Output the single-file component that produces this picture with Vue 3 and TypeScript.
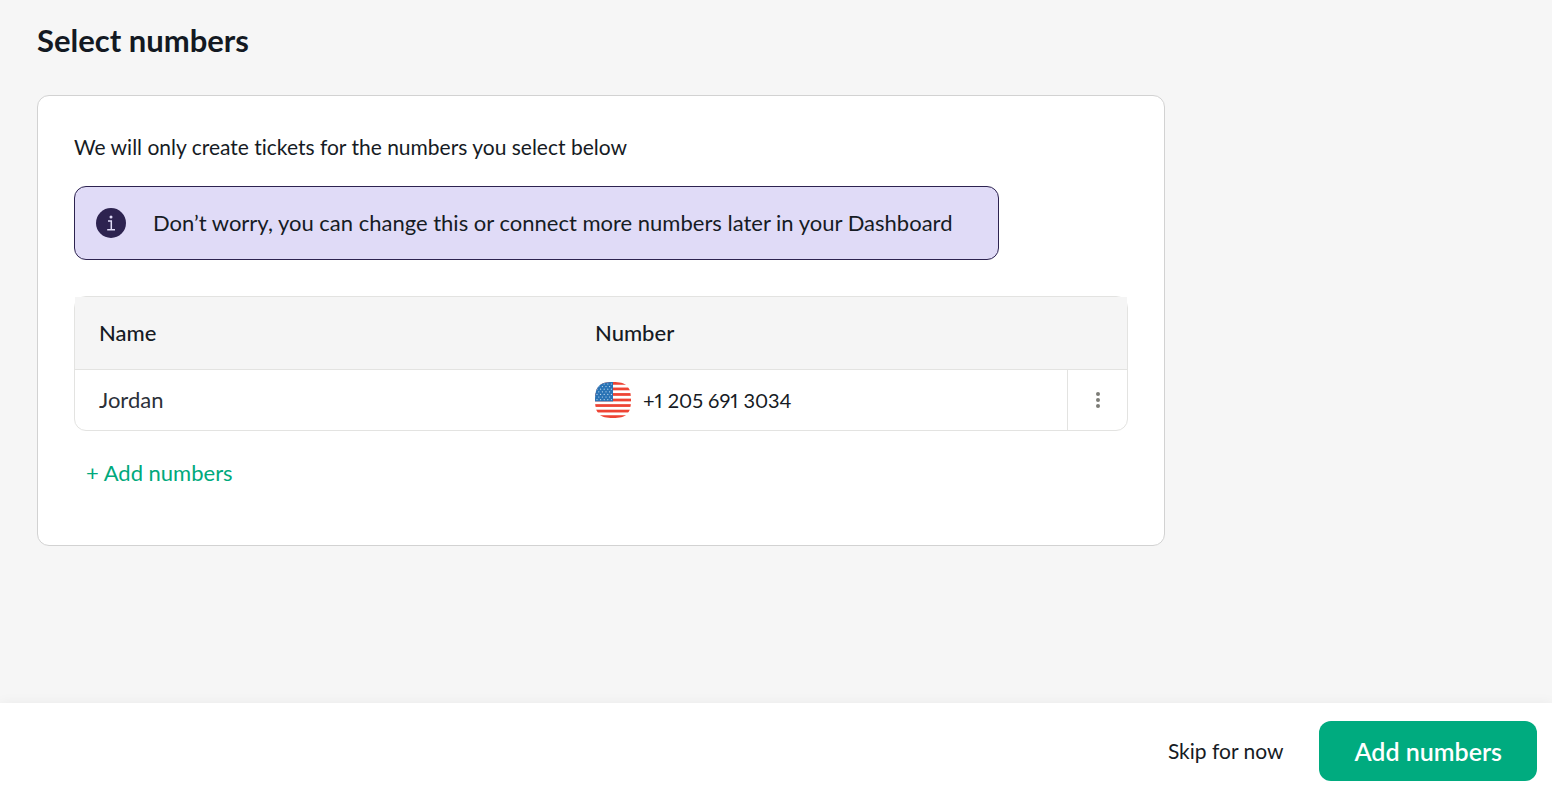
<script setup lang="ts">
interface PhoneNumber {
  name: string
  number: string
}

const numbers: PhoneNumber[] = [{ name: 'Jordan', number: '+1 205 691 3034' }]

const redStripes = [0, 2, 4, 6, 8, 10, 12]
const stars: { x: number; y: number }[] = []
for (let row = 0; row < 7; row++) {
  for (let col = 0; col < (row % 2 ? 4 : 5); col++) {
    stars.push({ x: 2 + col * 3.6 + (row % 2 ? 1.8 : 0), y: 2 + row * 2.6 })
  }
}
</script>

<template>
  <div class="page">
    <main class="content">
      <h1>Select numbers</h1>

      <section class="card">
        <p class="intro">We will only create tickets for the numbers you select below</p>

        <div class="notice" role="note">
          <svg class="info" viewBox="0 0 30 30" aria-hidden="true">
            <circle cx="15" cy="15" r="15" fill="#2d2350" />
            <circle cx="15" cy="9" r="1.5" fill="#e0dbf7" />
            <path d="M12 13h3.3v8.8M11.2 21.8h7.8" fill="none" stroke="#e0dbf7" stroke-width="1.5" />
          </svg>
          <p>Don’t worry, you can change this or connect more numbers later in your Dashboard</p>
        </div>

        <div class="table-frame">
          <table>
            <colgroup>
              <col class="col-name" />
              <col />
              <col class="col-menu" />
            </colgroup>
            <thead>
              <tr>
                <th scope="col">Name</th>
                <th scope="col">Number</th>
                <td></td>
              </tr>
            </thead>
            <tbody>
              <tr v-for="entry in numbers" :key="entry.number">
                <td class="name">{{ entry.name }}</td>
                <td>
                  <span class="phone">
                    <svg class="flag" viewBox="0 0 36 36" aria-hidden="true">
                      <defs>
                        <clipPath id="flag-shape">
                          <path d="M18 0C31 0 36 4 36 18S31 36 18 36 0 32 0 18 5 0 18 0Z" />
                        </clipPath>
                      </defs>
                      <g clip-path="url(#flag-shape)">
                        <rect width="36" height="36" fill="#fff" />
                        <rect
                          v-for="i in redStripes"
                          :key="i"
                          :y="(i * 36) / 13"
                          width="36"
                          :height="36 / 13"
                          fill="#ee4434"
                        />
                        <rect width="18" height="19.4" fill="#2a73b5" />
                        <circle v-for="(s, i) in stars" :key="i" :cx="s.x" :cy="s.y" r="0.6" fill="#c5dcf0" />
                      </g>
                    </svg>
                    <span>{{ entry.number }}</span>
                  </span>
                </td>
                <td class="menu-cell">
                  <button type="button" class="menu" :aria-label="`Options for ${entry.name}`">
                    <svg viewBox="0 0 4 16" aria-hidden="true">
                      <circle cx="2" cy="2" r="2" />
                      <circle cx="2" cy="8" r="2" />
                      <circle cx="2" cy="14" r="2" />
                    </svg>
                  </button>
                </td>
              </tr>
            </tbody>
          </table>
        </div>

        <button type="button" class="add-link">+ Add numbers</button>
      </section>
    </main>

    <footer class="footer">
      <button type="button" class="skip">Skip for now</button>
      <button type="button" class="primary">Add numbers</button>
    </footer>
  </div>
</template>

<style>
body {
  margin: 0;
  background: #f6f6f6;
}
</style>

<style scoped>
.page {
  box-sizing: border-box;
  min-height: 100vh;
  display: flex;
  flex-direction: column;
  background: #f6f6f6;
  color: #161b24;
  font-family: Lato, "Open Sans", sans-serif;
  font-size: 22px;
  line-height: 28px;
  font-variant-ligatures: none;
}
.content {
  flex: 1;
  padding: 22px 37px 36px;
}
h1 {
  margin: 0 0 37px;
  font-size: 31px;
  line-height: 36px;
  font-weight: 700;
  color: #131922;
}
p {
  margin: 0;
}
button {
  margin: 0;
  border: 0;
  background: none;
  color: inherit;
  font: inherit;
  cursor: pointer;
}
.card {
  box-sizing: border-box;
  max-width: 1128px;
  padding: 37px 36px 58px;
  border: 1px solid #d2d2d2;
  border-radius: 12px;
  background: #fff;
}
.intro {
  font-size: 21px;
}
.notice {
  box-sizing: border-box;
  max-width: 925px;
  min-height: 74px;
  margin: 25px 0 36px;
  padding: 21px;
  display: flex;
  align-items: center;
  gap: 27px;
  border: 1px solid #2d2350;
  border-radius: 12px;
  background: #e0dbf7;
}
.info {
  flex: none;
  width: 30px;
  height: 30px;
}
.table-frame {
  border: 1px solid #e3e3e1;
  border-radius: 12px;
}
table {
  width: 100%;
  table-layout: fixed;
  border-collapse: separate;
  border-spacing: 0;
}
.col-name {
  width: 496px;
}
.col-menu {
  width: 60px;
}
th,
td {
  box-sizing: border-box;
  height: 60px;
  padding: 0 24px;
  text-align: left;
  font-weight: 400;
}
thead th,
thead td {
  height: 73px;
  border-bottom: 1px solid #e3e3e1;
  background: #f5f5f5;
}
thead th {
  font-weight: 500;
}
.name {
  color: #2c3039;
}
.phone {
  display: flex;
  align-items: center;
  gap: 12px;
  font-size: 20px;
  font-variant-numeric: proportional-nums;
}
.flag {
  flex: none;
  width: 36px;
  height: 36px;
}
.menu-cell {
  padding: 0;
  border-left: 1px solid #e3e3e1;
}
.menu {
  width: 100%;
  height: 60px;
  padding: 0;
  display: flex;
  align-items: center;
  justify-content: center;
}
.menu svg {
  width: 4px;
  height: 16px;
  fill: #7c7c76;
}
.add-link {
  display: block;
  margin-top: 28px;
  padding: 0 12px;
  color: #00a97c;
}
.footer {
  min-height: 89px;
  box-sizing: border-box;
  padding: 14px 15px 7px;
  display: flex;
  align-items: center;
  justify-content: flex-end;
  gap: 24px;
  background: #fff;
  box-shadow: 0 0 12px rgba(0, 0, 0, 0.05);
}
.skip {
  padding: 12px;
  font-size: 21px;
}
.primary {
  min-height: 60px;
  padding: 0 35px;
  border-radius: 12px;
  background: #00ab7f;
  color: #fff;
  font-size: 25px;
  font-weight: 600;
}
</style>
